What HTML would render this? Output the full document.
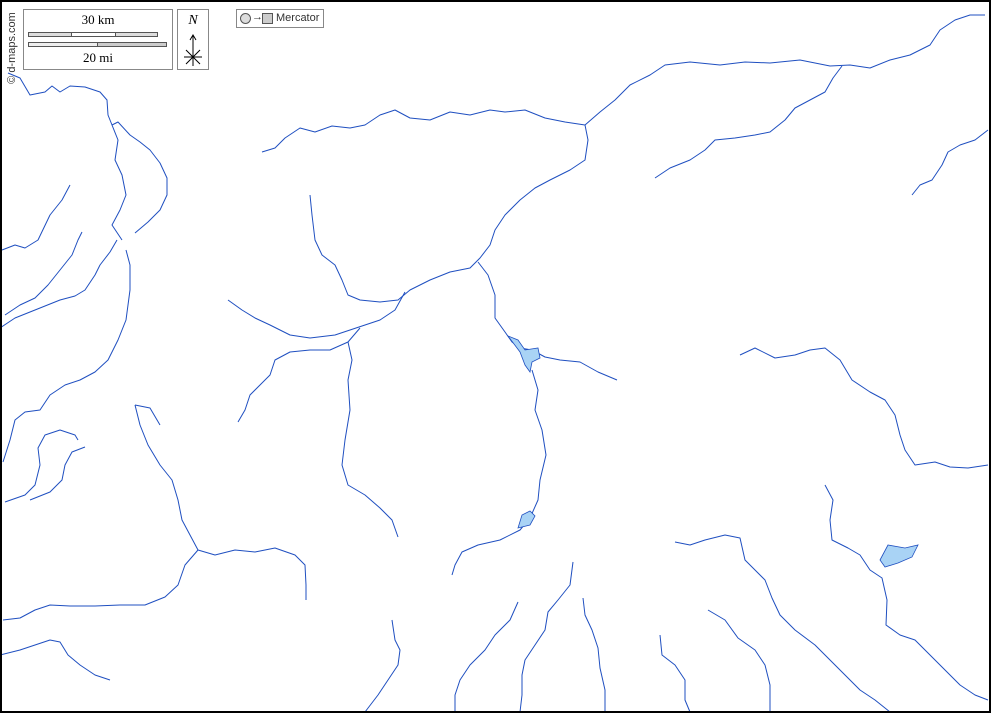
<!DOCTYPE html>
<html><head><meta charset="utf-8"><style>
html,body{margin:0;padding:0;background:#fff}
#m{position:relative;width:991px;height:713px;overflow:hidden;background:#fff}
svg{position:absolute;left:0;top:0}
.b{position:absolute;border:1px solid #888;background:#fff;font-family:"Liberation Serif",serif}
</style></head><body><div id="m">
<svg width="991" height="713" viewBox="0 0 991 713">
<g fill="none" stroke="#1f4fc0" stroke-width="1" stroke-linejoin="round">
<path d="M8 73 L20 78 L30 95 L45 92 L52 86 L60 92 L70 86 L85 87 L100 92 L107 100 L108 115 L112 125 L118 122 L130 135 L140 142 L150 150 L160 163 L167 178 L167 195 L160 210 L148 222 L135 233"/>
<path d="M112 125 L118 140 L115 160 L122 175 L126 195 L120 210 L112 225 L122 240"/>
<path d="M2 250 L15 245 L25 248 L38 240 L50 215 L62 200 L70 185"/>
<path d="M5 315 L20 305 L35 298 L48 285 L60 270 L72 255 L78 240 L82 232"/>
<path d="M0 328 L15 318 L30 312 L45 306 L60 300 L75 296 L85 290 L95 275 L100 265 L110 252 L117 240"/>
<path d="M126 250 L130 265 L130 290 L126 320 L118 340 L108 360 L95 372 L80 380 L65 385 L50 395 L40 410 L25 412 L15 420 L10 440 L3 462"/>
<path d="M5 502 L25 495 L35 485 L40 465 L38 448 L45 435 L60 430 L75 435 L78 440"/>
<path d="M30 500 L50 492 L62 480 L65 465 L72 452 L85 447"/>
<path d="M135 405 L140 425 L148 445 L160 465 L172 480 L178 500 L182 520 L190 535 L198 550 L215 555 L235 550 L255 552 L275 548 L295 555 L305 565 L306 585 L306 600"/>
<path d="M135 405 L150 408 L160 425"/>
<path d="M198 550 L185 565 L178 585 L165 597 L145 605 L120 605 L95 606 L70 606 L50 605 L35 610 L20 618 L3 620"/>
<path d="M0 655 L20 650 L35 645 L50 640 L60 642 L68 655 L80 665 L95 675 L110 680"/>
<path d="M262 152 L275 148 L285 138 L300 128 L315 132 L332 126 L350 128 L365 125 L380 115 L395 110 L410 118 L430 120 L450 112 L470 115 L490 110 L505 112 L525 110 L545 118 L565 122 L585 125 L600 112 L615 100 L630 85 L650 75 L665 65 L690 62 L720 65 L745 62 L770 63 L800 60 L830 66 L850 65 L870 68 L890 60 L910 55 L930 45 L940 30 L955 20 L970 15 L985 15"/>
<path d="M585 125 L588 140 L585 160 L570 170 L550 180 L535 188 L520 200 L505 215 L495 230 L490 245 L480 258 L470 268 L450 272 L430 280 L410 290 L398 300 L380 302 L360 300 L348 295 L342 280 L335 265 L322 255 L315 240 L312 215 L310 195"/>
<path d="M405 292 L395 310 L380 320 L365 325 L350 330 L335 335 L310 338 L290 335 L270 325 L255 318 L242 310 L228 300"/>
<path d="M360 328 L348 342 L330 350 L310 350 L290 352 L275 360 L270 375 L260 385 L250 395 L245 410 L238 422"/>
<path d="M348 342 L352 360 L348 380 L350 410 L345 440 L342 465 L348 485 L365 495 L380 508 L392 520 L398 537"/>
<path d="M478 262 L488 275 L495 295 L495 318 L505 332 L512 342 L520 348 L532 350 L545 357 L560 360 L580 362 L598 372 L617 380"/>
<path d="M532 370 L538 390 L535 410 L542 430 L546 455 L540 480 L538 500 L530 518 L520 530 L500 540 L478 545 L462 552 L455 565 L452 575"/>
<path d="M655 178 L670 168 L690 160 L705 150 L715 140 L735 138 L755 135 L770 132 L785 120 L795 108 L810 100 L825 92 L833 78 L842 66"/>
<path d="M912 195 L920 185 L932 180 L942 165 L948 152 L960 145 L975 140 L988 130"/>
<path d="M740 355 L755 348 L775 358 L795 355 L810 350 L825 348 L840 360 L852 380 L870 392 L885 400 L895 415 L900 435 L905 450 L915 465 L935 462 L950 467 L968 468 L988 465"/>
<path d="M825 485 L833 500 L830 520 L832 540 L848 548 L860 555 L870 570 L882 578 L887 600 L886 625 L900 635 L915 640 L930 655 L945 670 L960 685 L975 695 L988 700"/>
<path d="M675 542 L690 545 L705 540 L725 535 L740 538 L745 560 L755 570 L765 580 L772 598 L780 615 L795 630 L815 645 L830 660 L845 675 L860 690 L875 700 L890 712"/>
<path d="M708 610 L725 620 L738 638 L755 650 L765 665 L770 685 L770 712"/>
<path d="M660 635 L662 655 L675 665 L685 680 L685 700 L690 712"/>
<path d="M583 598 L585 615 L592 630 L598 648 L600 668 L605 690 L605 712"/>
<path d="M573 562 L570 585 L558 600 L548 612 L545 630 L535 645 L525 660 L522 675 L522 695 L520 712"/>
<path d="M518 602 L510 620 L495 635 L485 650 L470 665 L460 680 L455 695 L455 712"/>
<path d="M392 620 L395 640 L400 650 L398 665 L388 680 L378 695 L365 712"/>
</g>
<g fill="#a9d3f5" stroke="#1f4fc0" stroke-width="0.8">
<path d="M508 336 L518 340 L525 350 L538 348 L540 358 L532 362 L530 372 L525 365 L520 352 Z"/>
<path d="M518 528 L522 515 L530 511 L535 516 L530 525 Z"/>
<path d="M880 560 L888 545 L905 548 L918 545 L912 557 L898 563 L885 567 Z"/>
</g>
<rect x="1" y="1" width="989" height="711" fill="none" stroke="#000" stroke-width="2"/>
</svg>
<div class="b" style="left:23px;top:9px;width:148px;height:59px">
<div style="position:absolute;left:0;width:148px;top:2px;text-align:center;font-size:13px">30 km</div>
<div style="position:absolute;left:4px;top:22px;width:128px;height:3px;border:1px solid #555;background:#ddd"></div>
<div style="position:absolute;left:47px;top:22px;width:43px;height:3px;border:1px solid #555;background:#fff"></div>
<div style="position:absolute;left:4px;top:32px;width:137px;height:3px;border:1px solid #555;background:#eee"></div>
<div style="position:absolute;left:73px;top:32px;width:68px;height:3px;border:1px solid #555;background:#ccc"></div>
<div style="position:absolute;left:0;width:148px;top:40px;text-align:center;font-size:13px">20 mi</div>
</div>
<div class="b" style="left:177px;top:9px;width:30px;height:59px">
<div style="position:absolute;left:0;width:30px;top:3px;text-align:center;font-size:14px;font-style:italic">N</div>
<svg width="30" height="59" style="position:absolute;left:0;top:0"><g stroke="#000" stroke-width="1" fill="none"><path d="M15 26 L15 56 M12 30 L15 25 L18 30 M8 40 L22 54 M22 40 L8 54 M6 47 L24 47"/></g></svg>
</div>
<div class="b" style="left:236px;top:9px;width:86px;height:17px;font-family:'Liberation Sans',sans-serif;font-size:11px;color:#333">
<span style="position:absolute;left:3px;top:3px;width:9px;height:9px;border:1px solid #555;border-radius:50%;background:#ddd"></span>
<span style="position:absolute;left:15px;top:1px">→</span>
<span style="position:absolute;left:25px;top:3px;width:9px;height:9px;border:1px solid #555;background:#ccc"></span>
<span style="position:absolute;left:39px;top:2px">Mercator</span>
</div>
<div style="position:absolute;left:-28px;top:42px;transform:rotate(-90deg);font-family:'Liberation Sans',sans-serif;font-size:11px;color:#333;width:80px;text-align:center">© d-maps.com</div>
</div></body></html>
